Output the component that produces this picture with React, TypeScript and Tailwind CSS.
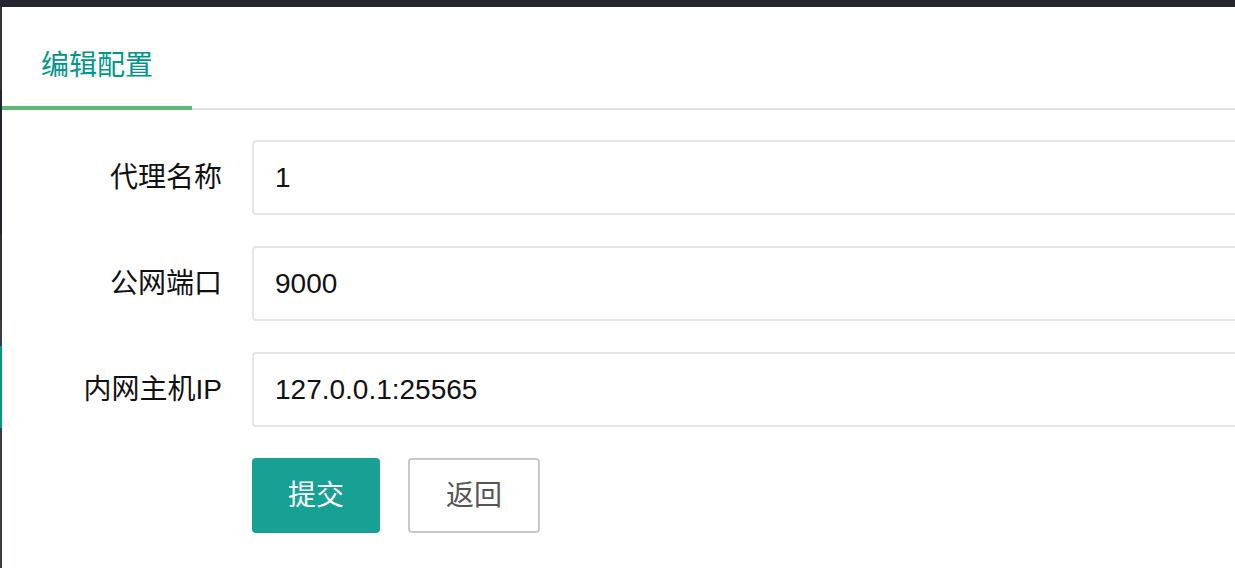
const font = { fontFamily: '"Liberation Sans", "Noto Sans CJK SC", sans-serif' };

const fields = [
  { label: '代理名称', value: '1' },
  { label: '公网端口', value: '9000' },
  { label: '内网主机IP', value: '127.0.0.1:25565' },
];

export default function App() {
  return (
    <div className="flex h-[568px] w-[1235px] flex-col overflow-hidden bg-[#23262e]" style={font}>
      <div className="h-[7px] shrink-0" />
      <div className="flex flex-1">
        {/* sidebar edge */}
        <div className="flex w-[2px] shrink-0 flex-col">
          <div className="h-[83px] bg-[#30323e]" />
          <div className="h-[145px] bg-[#23262e]" />
          <div className="h-[85px] bg-[#2d303c]" />
          <div className="h-[26px] bg-[#393d49]" />
          <div className="h-[82px] bg-[#009688]" />
          <div className="flex-1 bg-[#393d49]" />
        </div>

        {/* content */}
        <div className="flex-1 overflow-hidden bg-white">
          <div className="flex h-[103px] w-[1280px] border-b-2 border-[#e2e2e2]">
            <div className="relative flex w-[190px] items-center justify-center pt-[16px] text-[28px] text-[#009688]">
              编辑配置
              <div className="absolute bottom-[-2px] left-0 h-[4px] w-full bg-[#5fb878]" />
            </div>
          </div>

          <div className="flex w-[1280px] flex-col gap-[31px] pt-[30px]">
            {fields.map((f) => (
              <div key={f.label} className="flex items-center">
                <label className="w-[250px] shrink-0 pr-[30px] text-right text-[28px] text-[#111]">
                  {f.label}
                </label>
                <div className="flex h-[75px] flex-1 items-center rounded-[4px] border-2 border-[#e6e6e6] pl-[21px] text-[28px] text-[#111]">
                  {f.value}
                </div>
              </div>
            ))}

            <div className="ml-[250px] flex gap-[28px]">
              <button className="flex h-[75px] w-[128px] items-center justify-center rounded-[4px] bg-[#17a094] text-[28px] text-white">
                提交
              </button>
              <button className="flex h-[75px] w-[132px] items-center justify-center rounded-[4px] border-2 border-[#c9c9c9] bg-white text-[28px] text-[#555]">
                返回
              </button>
            </div>
          </div>
        </div>
      </div>
    </div>
  );
}
